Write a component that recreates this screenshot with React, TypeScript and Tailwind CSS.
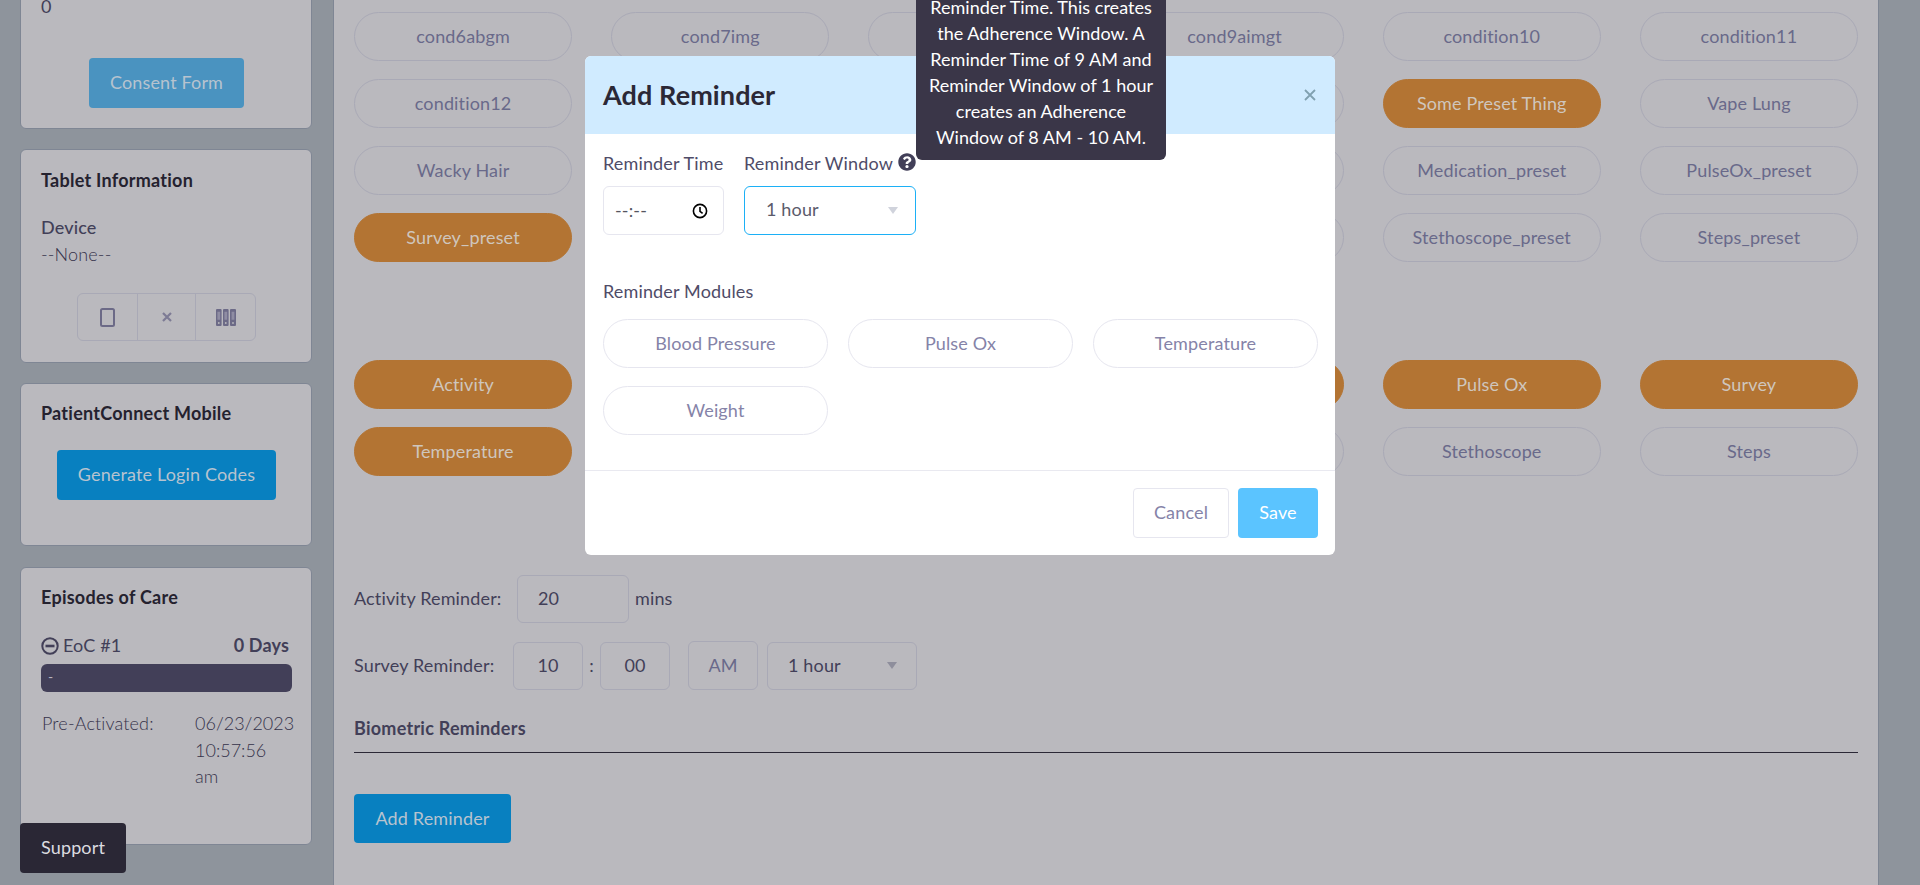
import React from "react";
import { FaQuestionCircle } from "react-icons/fa";

const pill = "flex h-[49px] items-center justify-center rounded-full border pb-[2px] text-[18px]";
const off = `${pill} border-[#a9a9b6] text-[#69698a]`;
const on = `${pill} border-[#b37433] bg-[#b37433] text-[#cfc6bd]`;

type P = [string, boolean];
const presets: P[] = [
  ["cond6abgm", false], ["cond7img", false], ["cond8img", false], ["cond9aimgt", false], ["condition10", false], ["condition11", false],
  ["condition12", false], ["Pediatric", false], ["Peds Lung", false], ["Post-Op", false], ["Some Preset Thing", true], ["Vape Lung", false],
  ["Wacky Hair", false], ["Activity_preset", false], ["BP_preset", false], ["Glucose_preset", false], ["Medication_preset", false], ["PulseOx_preset", false],
  ["Survey_preset", true], ["Temp_preset", false], ["Weight_preset", false], ["Spiro_preset", false], ["Stethoscope_preset", false], ["Steps_preset", false],
];
const modules: P[] = [
  ["Activity", true], ["Blood Pressure", true], ["Glucose", true], ["Medication", true], ["Pulse Ox", true], ["Survey", true],
  ["Temperature", true], ["Weight", true], ["Spirometer", false], ["Otoscope", false], ["Stethoscope", false], ["Steps", false],
];

function Caret() {
  return <span className="mt-[3px] h-0 w-0 border-x-[5px] border-t-[7px] border-x-transparent border-t-[#d0d3dc]" />;
}
function CaretDim() {
  return <span className="mt-[2px] h-0 w-0 border-x-[5px] border-t-[7px] border-x-transparent border-t-[#8e8e9c]" />;
}
const card = "w-[292px] rounded-md border border-[#7f8694] bg-[#bab9be] pr-[19px] pl-[20px]";
const h = "font-bold tracking-[0.25px] text-[#25222f]";
const box = "items-center rounded-md border border-[#a9a9b6] pb-[2px]";

export default function App() {
  return (
    <div className="relative flex h-[885px] w-[1920px] overflow-hidden bg-[#8e949c] text-[18px] leading-[26px] tracking-[0.15px] text-[#423f58]" style={{ fontFamily: "Lato, sans-serif" }}>
      <aside className="w-[333px] shrink-0 pl-[20px]">
        <div className={`${card} -mt-[10px] pt-[2px] pb-[20px]`}>
          <div>0</div>
          <button className="mx-auto mt-[39px] flex h-[50px] w-[155px] items-center justify-center rounded-[4px] bg-[#4a93c0] pb-[2px] text-[#b7c3cf]">Consent Form</button>
        </div>
        <div className={`${card} mt-[20px] pt-[17px] pb-[21px]`}>
          <div className={h}>Tablet Information</div>
          <div className="mt-[21px] font-medium">Device</div>
          <div className="mt-[1px] font-light text-[#35324a]">--None--</div>
          <div className="mx-auto mt-[26px] flex h-[48px] w-[179px] rounded-md border border-[#a9a9b6]">
            <span className="flex w-[59px] items-center justify-center">
              <svg width="15" height="19" viewBox="0 0 15 19"><rect x="1" y="1" width="13" height="17" rx="1.5" fill="none" stroke="#6c6a87" strokeWidth="2" /></svg>
            </span>
            <span className="flex w-[59px] items-center justify-center border-x border-[#a9a9b6]">
              <svg width="10" height="10" viewBox="0 0 10 10"><path d="M1 1l8 8M9 1l-8 8" stroke="#7d7b95" strokeWidth="2.2" /></svg>
            </span>
            <span className="flex flex-1 items-center justify-center">
              <svg width="20" height="17" viewBox="0 0 20 17">
                <path fill="#6c6a87" d="M0 1a1 1 0 011-1h3.6a1 1 0 011 1v15a1 1 0 01-1 1H1a1 1 0 01-1-1zM7 1a1 1 0 011-1h3.6a1 1 0 011 1v15a1 1 0 01-1 1H8a1 1 0 01-1-1zM14 1a1 1 0 011-1H19a1 1 0 011 1v15a1 1 0 01-1 1h-4a1 1 0 01-1-1z" />
                <path fill="#8f8da3" d="M1.4 2.8h2.8v8h-2.8zM8.4 2.8h2.8v8h-2.8zM15.6 2.8h2.8v8h-2.8z" />
                <circle cx="2.8" cy="14" r="0.9" fill="#bab9be" /><circle cx="9.8" cy="14" r="0.9" fill="#bab9be" /><circle cx="17" cy="14" r="0.9" fill="#bab9be" />
              </svg>
            </span>
          </div>
        </div>
        <div className={`${card} mt-[20px] pt-[16px] pb-[45px]`}>
          <div className={h}>PatientConnect Mobile</div>
          <button className="mx-auto mt-[24px] flex h-[50px] w-[219px] items-center justify-center rounded-[4px] bg-[#0880c0] pb-[2px] text-[#b7c3cf]">Generate Login Codes</button>
        </div>
        <div className={`${card} mt-[21px] h-[278px] pt-[16px]`}>
          <div className={h}>Episodes of Care</div>
          <div className="mt-[22px] flex items-center justify-between pr-[3px]">
            <span className="flex items-center gap-[4px] font-normal">
              <svg className="mt-[1px]" width="18" height="18" viewBox="0 0 18 18"><circle cx="9" cy="9" r="7.7" fill="none" stroke="#423f58" strokeWidth="2" /><path d="M4.5 7.7h9v2.6h-9z" fill="#423f58" /></svg>
              EoC #1
            </span>
            <span className="font-bold">0 Days</span>
          </div>
          <div className="mt-[6px] h-[28px] rounded-md bg-[#423f58] px-[7px] text-[14px] leading-[26px] text-[#b7b6c0]">-</div>
          <div className="mt-[18px] flex justify-between leading-[26.5px] font-light text-[#35324a]">
            <span className="pl-[1px]">Pre-Activated:</span>
            <span className="w-[97px] tracking-normal">06/23/2023 10:57:56 am</span>
          </div>
        </div>
      </aside>

      <main className="h-[885px] w-[1546px] shrink-0 border-x border-[#7f8694] bg-[#bab9be] px-[20px] pt-[12px]">
        <div className="grid grid-cols-6 gap-x-[39px] gap-y-[18px]">
          {presets.map(([t, a]) => <div key={t} className={a ? on : off}>{t}</div>)}
        </div>
        <div className="mt-[98px] grid grid-cols-6 gap-x-[39px] gap-y-[18px]">
          {modules.map(([t, a]) => <div key={t} className={a ? on : off}>{t}</div>)}
        </div>
        <div className="mt-[99px] flex items-center">
          <span className="w-[163px] pb-[2px]">Activity Reminder:</span>
          <span className={`flex h-[48px] w-[112px] pl-[20px] ${box}`}>20</span>
          <span className="ml-[6px] pb-[2px]">mins</span>
        </div>
        <div className="mt-[18px] flex items-center">
          <span className="w-[159px] pb-[2px]">Survey Reminder:</span>
          <span className={`flex h-[48px] w-[70px] justify-center ${box}`}>10</span>
          <span className="w-[17px] pb-[2px] text-center">:</span>
          <span className={`flex h-[48px] w-[70px] justify-center ${box}`}>00</span>
          <span className={`ml-[18px] flex h-[49px] w-[70px] justify-center text-[#69698a] ${box}`}>AM</span>
          <span className={`ml-[9px] flex h-[48px] w-[150px] justify-between pr-[19px] pl-[20px] ${box}`}>1 hour <CaretDim /></span>
        </div>
        <div className="mt-[25px] border-b border-[#2b2836] pb-[11px] font-bold tracking-[0.25px]">Biometric Reminders</div>
        <button className="mt-[41px] flex h-[49px] w-[157px] items-center justify-center rounded-[4px] bg-[#0880c0] pb-[2px] text-[#b7c3cf]">Add Reminder</button>
      </main>

      <button className="absolute top-[823px] left-[20px] flex h-[50px] w-[106px] items-center justify-center rounded-[4px] bg-[#2a2735] pb-[2px] text-[#dcdce0]">Support</button>

      <div className="absolute top-[56px] left-[585px] w-[750px] rounded-md bg-white text-[#4f4c68]">
        <div className="flex h-[78px] items-center justify-between rounded-t-md bg-[#d0ebff] pr-[19px] pl-[18px]">
          <span className="text-[27px] font-bold tracking-[0.1px] text-[#2b2836]">Add Reminder</span>
          <svg width="12" height="12" viewBox="0 0 12 12"><path d="M1 1l10 10M11 1L1 11" stroke="#80a0b0" strokeWidth="1.8" /></svg>
        </div>
        <div className="border-b border-[#e9e9f0] pt-[16px] pr-[17px] pb-[35px] pl-[18px]">
          <div className="flex gap-[20px]">
            <div className="w-[121px]">
              <div>Reminder Time</div>
              <div className="mt-[10px] flex h-[49px] items-center justify-between rounded-md border border-[#e6e6ef] pr-[15px] pb-[2px] pl-[11px] text-[#55555f]">
                --:--
                <svg className="mt-[2px]" width="16" height="16" viewBox="0 0 16 16" fill="none" stroke="#000" strokeWidth="1.6"><circle cx="8" cy="8" r="6.6" /><path d="M8 4v4.4l2.6 2" /></svg>
              </div>
            </div>
            <div className="w-[172px]">
              <div className="flex items-center justify-between whitespace-nowrap">
                Reminder Window
                <FaQuestionCircle className="-mt-[2px] ml-[4px] shrink-0 text-[18px] text-[#423f58]" />
              </div>
              <div className="mt-[10px] flex h-[49px] items-center justify-between rounded-md border border-[#1cb0f6] pr-[17px] pb-[3px] pl-[21px] text-[#5b5b6b]">1 hour <Caret /></div>
            </div>
          </div>
          <div className="mt-[43px]">Reminder Modules</div>
          <div className="mt-[15px] grid grid-cols-3 gap-x-[20px] gap-y-[18px]">
            {["Blood Pressure", "Pulse Ox", "Temperature", "Weight"].map((t) => (
              <div key={t} className={`${pill} border-[#e6e6ef] text-[#8583a8]`}>{t}</div>
            ))}
          </div>
        </div>
        <div className="flex justify-end gap-[9px] pt-[17px] pr-[17px] pb-[17px] pl-[18px]">
          <button className="flex h-[50px] w-[96px] items-center justify-center rounded-[4px] border border-[#e6e6ef] pb-[2px] text-[#8583a8]">Cancel</button>
          <button className="flex h-[50px] w-[80px] items-center justify-center rounded-[4px] bg-[#5bc4ff] pb-[2px] text-white">Save</button>
        </div>
      </div>

      <div className="absolute top-[-12px] left-[916px] flex h-[172px] w-[250px] flex-col justify-end rounded-md bg-[#3a3648] pb-[10px] text-center tracking-[0.03px] whitespace-nowrap text-white">
        <div>Reminder Time. This creates<br />the Adherence Window. A<br />Reminder Time of 9 AM and<br />Reminder Window of 1 hour<br />creates an Adherence<br />Window of 8 AM - 10 AM.</div>
      </div>
    </div>
  );
}
